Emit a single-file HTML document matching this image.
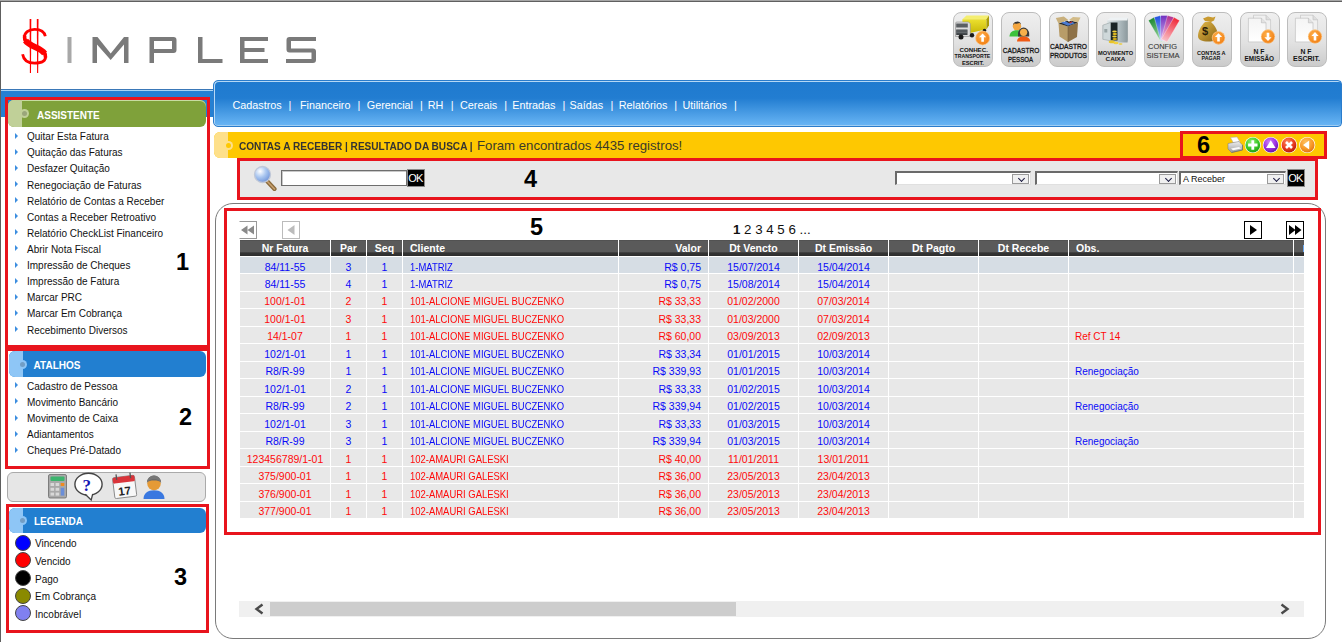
<!DOCTYPE html>
<html><head><meta charset="utf-8">
<style>
*{box-sizing:border-box;margin:0;padding:0}
html,body{width:1342px;height:642px;overflow:hidden;background:#fff}
body{position:relative;font-family:"Liberation Sans",sans-serif;font-size:11px;color:#000}
.abs{position:absolute}
#topb{left:0;top:0;width:1342px;height:2px;background:linear-gradient(#a6a6a6 0,#a6a6a6 1px,#606060 1px,#606060 2px)}
#leftb{left:0;top:1px;width:1px;height:641px;background:#5e5e5e}
/* sidebar band */
#sband{left:1px;top:89px;width:213px;height:28px;background:#2580d2;border-top:1px solid #3a78b8}
#sband:before{content:"";position:absolute;left:0;top:0;right:0;height:1px;background:#a9d3f3}
/* nav */
#nav{left:213px;top:80px;width:1129px;height:47px;border:1px solid #2a7ccc;border-radius:5px 4px 4px 5px;
 background:linear-gradient(#1f7acf 0%,#227dd1 38%,#6ab6f5 100%);box-shadow:inset 1px 1px 0 #b5d8f5, inset 0 -1px 0 #9fcdf2}
#nav span{position:absolute;top:17.8px;color:#fff;font-size:10.8px;line-height:12px;white-space:pre}
/* yellow bar */
#ybar{left:214px;top:132px;width:1110px;height:26px;background:#fec801;border-radius:6px 0 0 6px}
#ybar .tab{position:absolute;left:0;top:0;width:14px;height:26px;background:#fee08a;border-radius:6px 0 0 6px}
#ybar .t1{position:absolute;left:25px;top:8px;font-weight:bold;font-size:11px;line-height:13px;color:#333;white-space:pre;transform:scaleX(0.916);transform-origin:0 0}
#ybar .t2{position:absolute;left:263px;top:6.7px;font-size:13.2px;line-height:14px;color:#3a3a2a;white-space:pre}
/* search bar */
#sbar{left:239px;top:160px;width:1077px;height:38px;background:#e8e8e8}
/* main box */
#mainbox{left:215px;top:203px;width:1111px;height:436px;border:1.5px solid #7a7a7a;border-radius:18px;background:#fff}
/* red annotation boxes */
.rb{position:absolute;border:3px solid #e8141d}
.num{position:absolute;font-weight:bold;font-size:23.5px;line-height:24px;color:#000}
/* sidebar */
.shead{position:absolute;height:26px;border-radius:6px;color:#fff;font-weight:bold;font-size:10px}
.shead .tab{position:absolute;left:0;top:0;bottom:0;width:14px;border-radius:6px 0 0 6px}
.shead .dot{position:absolute;width:9px;height:9px;border-radius:50%}
.shead .dot:after{content:"";position:absolute;left:2px;top:2px;width:5px;height:5px;border-radius:50%;background:inherit;filter:brightness(0.8)}
.shead span{position:absolute;left:29px;top:8px}
.items{position:absolute;left:14px}
.items div{height:16.12px;line-height:16.12px;position:relative;padding-left:13px;font-size:10px;color:#111}
.items div:before{content:"";position:absolute;left:1px;top:3.5px;border-left:3px solid #3c8ee0;border-top:3px solid transparent;border-bottom:3px solid transparent}
/* table */
.th{position:absolute;top:240px;height:16px;background:linear-gradient(#4a4a4a 0px,#5a5a5a 1px,#5a5a5a 11.5px,#343434 13px,#2e2e2e 16px);color:#fff;font-weight:bold;font-size:10.5px;line-height:16.7px;white-space:nowrap;overflow:hidden}
.tr{position:absolute;left:0;height:17.47px;width:1342px}
.td{position:absolute;top:0;height:17.47px;border-top:1px solid #fff;background:#e8e8e8;font-size:10.5px;line-height:16.4px;padding-top:1.5px;white-space:nowrap;overflow:hidden}
.tr.sel .td{background:#d6dde4}
.tr.b .td{color:#0a0af8}
.tr.r .td{color:#ff0a0a}
.c{text-align:center}.l{text-align:left;padding-left:7px}.rt{text-align:right;padding-right:7px}
/* top icons */
.tico{position:absolute;top:12px;width:40px;height:55px;border:1px solid #bdbdbd;border-radius:8px;background:linear-gradient(#efefef,#e2e2e2 55%,#cbcbcb);overflow:hidden}
.tico .lbl{position:absolute;left:0;right:0;text-align:center;font-size:6px;line-height:6.5px;color:#222;font-weight:bold}

.okb{background:#000;border:1px solid #8a8a8a;color:#fff;font-size:11px;line-height:17px;text-align:center;letter-spacing:-0.8px;text-indent:-1px}
.dd{position:absolute;height:14px;background:#fff;border-top:2px solid #6a6a6a;border-left:2px solid #6a6a6a;border-right:1px solid #e0e0e0;border-bottom:1px solid #e0e0e0}
.dd i{position:absolute;right:1px;top:1px;width:17px;height:10px;background:#f0f0f0;border:1px solid #9a9a9a}
.dd i:after{content:"";position:absolute;left:5.5px;top:0.5px;width:4px;height:4px;border-right:1.6px solid #1a1a40;border-bottom:1.6px solid #1a1a40;transform:rotate(45deg)}
.dd span{position:absolute;left:2px;top:0px;font-size:9px;line-height:13px;color:#111}
.pbtn{position:absolute;border:1px solid #999;background:#fff}
.pbtn svg{position:absolute;left:0;top:0}
.pages{left:733px;top:222.6px;font-size:13.3px;line-height:14px;color:#111;white-space:pre}
.pages b{font-weight:bold}
.leg{position:absolute;left:15px;height:18px;padding-left:20px;font-size:10px;line-height:20.6px;color:#111}
.leg i{position:absolute;left:0;top:0.3px;width:16px;height:16px;border-radius:50%;border:1px solid #444}
.td.cli span{display:inline-block;transform:scaleX(0.9);transform-origin:0 0}
.td.obs{font-size:10px;padding-left:6px;padding-top:2px}
</style></head><body>
<div id="topb" class="abs"></div>
<div id="leftb" class="abs"></div>

<!-- logo -->
<svg class="abs" style="left:0;top:0" width="330" height="80">
 <g fill="none" stroke="#ff0000" stroke-linecap="butt">
  <path d="M45.3 36.2C44.3 31.2 40.2 29.3 34.6 29.3C28.6 29.3 24.3 32.6 24.3 37.6C24.3 43.2 29.5 45.2 35 47.2C41 49.4 45.6 51.6 45.6 56.6C45.6 61.2 40.6 63.2 34.6 63.2C28.3 63.2 23.6 60.2 22.6 54.2" stroke-width="2.8"/>
  <path d="M25.5 40.5C27.5 43.5 30.5 45 35 47C39.5 49 42.5 50.5 44.6 53.5" stroke-width="6"/>
  <path d="M24.6 35.5C24.3 38 24.8 40 26 41.5M44.3 52.5C45.2 54 45.6 55 45.5 57.5" stroke-width="3.6"/>
 </g>
 <path d="M29.6 19h1.7l-.3 54h-1.1z" fill="#ff0000"/>
 <path d="M36.8 19h1.7l-.3 54h-1.1z" fill="#ff0000"/>
 <g fill="#7a7a7a">
  <rect x="67.5" y="37" width="4" height="26" fill="#a8a8a8"/>
  <path d="M92.5 37h5l13.2 16.5L124 37h4.5v26h-4.5V44.5L110.7 60 97 44.5V63h-4.5z"/>
  <path d="M149.5 37h24a3 3 0 0 1 3 3v10a3 3 0 0 1-3 3h-19.5v10h-4.5zM154 41v8h18v-8z"/>
  <path d="M198 37h4.5v22h20v4H198z"/>
  <path d="M240 37h28v4h-23.5v7h20v4h-20v7h23.5v4H240z"/>
  <path d="M289.5 37h26.5v4h-25v7.5h22a3 3 0 0 1 3 3V60a3 3 0 0 1-3 3h-27v-4h25.5v-6.5h-22a3 3 0 0 1-3-3V40a3 3 0 0 1 3-3z"/>
 </g>
</svg>

<!-- top icons -->
<svg width="0" height="0" style="position:absolute"><defs><radialGradient id="og" cx="0.4" cy="0.35" r="0.7"><stop offset="0" stop-color="#ffb04a"/><stop offset="1" stop-color="#f07b10"/></radialGradient><linearGradient id="yg" x1="0" y1="0" x2="0" y2="1"><stop offset="0" stop-color="#ece030"/><stop offset="1" stop-color="#c8b808"/></linearGradient><linearGradient id="bag" x1="0" y1="0" x2="1" y2="1"><stop offset="0" stop-color="#e2b84a"/><stop offset="1" stop-color="#8a6414"/></linearGradient><linearGradient id="doc" x1="0" y1="0" x2="0" y2="1"><stop offset="0" stop-color="#f4f4f4"/><stop offset="1" stop-color="#ffffff"/></linearGradient><linearGradient id="safe" x1="0" y1="0" x2="1" y2="0"><stop offset="0" stop-color="#dfe6e8"/><stop offset="0.5" stop-color="#b8c4c8"/><stop offset="1" stop-color="#8d9a9e"/></linearGradient></defs></svg><div class="tico" style="left:953px"><svg width="40" height="54" viewBox="0 0 40 54" style="position:absolute;left:-1px;top:-1px"><path d="M9.4 7.2L13.5 3.6H36L33.5 7.2z" fill="#f4ee70"/><path d="M9.4 7.2h24.1v10L17 21H9.4z" fill="url(#yg)"/><path d="M33.5 7.2L36 3.6v9.6l-2.5 4z" fill="#a89a08"/><path d="M2.5 11.5q0-1.5 1.5-1.5h11.5l1.8 1.8v12.7H2.5z" fill="#dcdcdc" stroke="#8a8a8a" stroke-width="0.6"/><path d="M3.2 11.6h11.6v4H3.2z" fill="#5a5e62"/><path d="M3.2 17.5h11.3v5.5H3.2z" fill="#3e4246"/><path d="M3.6 19h10.6M3.6 20.7h10.6" stroke="#8a9094" stroke-width="0.6"/><circle cx="8" cy="25" r="2.5" fill="#1a1a1a"/><circle cx="19" cy="23.3" r="2.2" fill="#1a1a1a"/><circle cx="31.5" cy="18.5" r="1.8" fill="#1a1a1a"/><circle cx="29.6" cy="26" r="7.2" fill="url(#og)"/><circle cx="29.6" cy="26" r="6.9" fill="none" stroke="#fff2d0" stroke-width="0.6" opacity="0.7"/><path d="M29.6 21.5l-3.6 3.8h2.3v4.5h2.6v-4.5h2.3z" fill="#fff"/><text x="6.5" y="39.6" font-size="6.2" font-weight="bold" fill="#141414" textLength="28.4" lengthAdjust="spacingAndGlyphs">CONHEC.</text><text x="1.6" y="46.3" font-size="6.2" font-weight="bold" fill="#141414" textLength="35.7" lengthAdjust="spacingAndGlyphs">TRANSPORTE</text><text x="8.9" y="52.6" font-size="6.2" font-weight="bold" fill="#141414" textLength="22" lengthAdjust="spacingAndGlyphs">ESCRIT.</text></svg></div><div class="tico" style="left:1001px"><svg width="40" height="54" viewBox="0 0 40 54" style="position:absolute;left:-1px;top:-1px"><circle cx="16" cy="14.2" r="4.2" fill="#f4a640"/><path d="M11.8 13.5a4.3 4.3 0 0 1 8.4-.8l-1.5-1.7-3.2.8-2.4-.3z" fill="#333"/><path d="M8.4 24.6c.4-4 2.5-6.3 7.6-6.3s7 2.3 7.4 6.3z" fill="#3cc23c"/><path d="M17 22a5.6 6.5 0 0 1 11.2 0v2.6h-11.2z" fill="#3a3a3a"/><circle cx="22.6" cy="20.3" r="3.6" fill="#f7b04a"/><path d="M16 29.4c.3-3.5 2.5-5 6.6-5s6.3 1.5 6.6 5z" fill="#f05a14"/><text x="1.8" y="41" font-size="7.6" font-weight="normal" fill="#141414" stroke="#141414" stroke-width="0.3" textLength="36.5" lengthAdjust="spacingAndGlyphs">CADASTRO</text><text x="7" y="49.7" font-size="7.6" font-weight="normal" fill="#141414" stroke="#141414" stroke-width="0.3" textLength="25" lengthAdjust="spacingAndGlyphs">PESSOA</text></svg></div><div class="tico" style="left:1049px"><svg width="40" height="54" viewBox="0 0 40 54" style="position:absolute;left:-1px;top:-1px"><path d="M9.5 11.5L19 14.5v15.5l-8.5-5.5z" fill="#b89c68"/><path d="M19 14.5l10-4-1 14.5-9 5z" fill="#8e7248"/><path d="M9.5 11.5l9.5 3 10-4-9.5-2.5z" fill="#2a2a2a"/><path d="M12 10.8l4-2 4 2.5 3-1.5 3 1.5-7 2.5z" fill="#4a7ad0"/><path d="M15 9.5l2-2.5 3 2 2.5-1.5" stroke="#f0f0f0" stroke-width="1.3" fill="none"/><path d="M20.5 11l2.5-1.2" stroke="#c83030" stroke-width="1.1"/><path d="M9.5 11.5L6.8 6l8-1.5 4.5 3.5z" fill="#c9b07c"/><path d="M29 10.5l2.5-5-7.5-.5-4 3z" fill="#d2bb88"/><path d="M19 30v-15.5" stroke="#6a5434" stroke-width="0.5"/><text x="1" y="36.7" font-size="7.6" font-weight="normal" fill="#141414" stroke="#141414" stroke-width="0.3" textLength="37" lengthAdjust="spacingAndGlyphs">CADASTRO</text><text x="1" y="45.8" font-size="7.6" font-weight="normal" fill="#141414" stroke="#141414" stroke-width="0.3" textLength="37" lengthAdjust="spacingAndGlyphs">PRODUTOS</text></svg></div><div class="tico" style="left:1096px"><svg width="40" height="54" viewBox="0 0 40 54" style="position:absolute;left:-1px;top:-1px"><path d="M11 8.5L14.5 5.5H32L31.5 8.5z" fill="#eef2f4"/><path d="M11 8.5h20.5v22H11z" fill="url(#safe)"/><path d="M31.5 8.5L32 5.5v22.5l-.5 2.5z" fill="#7e8c90"/><path d="M14.5 10.5h7v18h-7z" fill="#1a2426"/><path d="M6.8 13.2L14.5 10.5v18.3L6.8 27.3z" fill="#cfd8da" stroke="#8a9699" stroke-width="0.5"/><path d="M8.3 17h3v3.5h-3z" fill="#98a4a6"/><ellipse cx="18.5" cy="19.5" rx="2.3" ry="1.1" fill="#f0d040"/><ellipse cx="18.8" cy="22" rx="2.3" ry="1.1" fill="#e8c020"/><ellipse cx="18.5" cy="24.5" rx="2.3" ry="1.1" fill="#f0d040"/><ellipse cx="18.8" cy="27" rx="2.3" ry="1.1" fill="#d8b010"/><ellipse cx="15.8" cy="29.8" rx="3" ry="1.5" fill="#e8c42a"/><ellipse cx="20" cy="31" rx="2.6" ry="1.3" fill="#f0d040"/><ellipse cx="24.5" cy="32" rx="2" ry="1" fill="#e8d060"/><text x="2.1" y="43.4" font-size="6.2" font-weight="bold" fill="#141414" textLength="35" lengthAdjust="spacingAndGlyphs">MOVIMENTO</text><text x="9.5" y="49.2" font-size="6.2" font-weight="bold" fill="#141414" textLength="20" lengthAdjust="spacingAndGlyphs">CAIXA</text></svg></div><div class="tico" style="left:1144px"><svg width="40" height="54" viewBox="0 0 40 54" style="position:absolute;left:-1px;top:-1px"><defs><linearGradient id="fg0" x1="0" y1="0" x2="0" y2="1"><stop offset="0" stop-color="#1e8a30"/><stop offset="1" stop-color="#a8e0b0"/></linearGradient><linearGradient id="fg1" x1="0" y1="0" x2="0" y2="1"><stop offset="0" stop-color="#2050e0"/><stop offset="1" stop-color="#b0c8f8"/></linearGradient><linearGradient id="fg2" x1="0" y1="0" x2="0" y2="1"><stop offset="0" stop-color="#7030c0"/><stop offset="1" stop-color="#d8b8f0"/></linearGradient><linearGradient id="fg3" x1="0" y1="0" x2="0" y2="1"><stop offset="0" stop-color="#b03090"/><stop offset="1" stop-color="#f0b8e0"/></linearGradient><linearGradient id="fg4" x1="0" y1="0" x2="0" y2="1"><stop offset="0" stop-color="#f02838"/><stop offset="1" stop-color="#f8c0c8"/></linearGradient></defs><g transform="rotate(-30 20 29)"><rect x="16.8" y="3.5" width="6.4" height="25" fill="url(#fg0)" stroke="#fff" stroke-width="0.3"/></g><g transform="rotate(-15 20 29)"><rect x="16.8" y="3.5" width="6.4" height="25" fill="url(#fg1)" stroke="#fff" stroke-width="0.3"/></g><g transform="rotate(0 20 29)"><rect x="16.8" y="3.5" width="6.4" height="25" fill="url(#fg2)" stroke="#fff" stroke-width="0.3"/></g><g transform="rotate(15 20 29)"><rect x="16.8" y="3.5" width="6.4" height="25" fill="url(#fg3)" stroke="#fff" stroke-width="0.3"/></g><g transform="rotate(30 20 29)"><rect x="16.8" y="3.5" width="6.4" height="25" fill="url(#fg4)" stroke="#fff" stroke-width="0.3"/></g><text x="4" y="36.7" font-size="7.8" font-weight="normal" fill="#3a3a3a" stroke="#3a3a3a" stroke-width="0.12" textLength="29" lengthAdjust="spacingAndGlyphs">CONFIG</text><text x="2.5" y="46.3" font-size="7.8" font-weight="normal" fill="#3a3a3a" stroke="#3a3a3a" stroke-width="0.12" textLength="33" lengthAdjust="spacingAndGlyphs">SISTEMA</text></svg></div><div class="tico" style="left:1192px"><svg width="40" height="54" viewBox="0 0 40 54" style="position:absolute;left:-1px;top:-1px"><path d="M11 6.5l5-2 5 1 2.5-1-1.5 4-3 1.5-6-1z" fill="#c99a30"/><path d="M13 10c-4 4-7 9-7 14 0 4 4 5.5 10 5.5s9.5-1.5 10-4c.5-6-3-12-7-15.5z" fill="url(#bag)"/><text x="10" y="23" font-size="11" font-weight="bold" fill="#2a2008">$</text><circle cx="26.5" cy="25.8" r="6.6" fill="url(#og)"/><circle cx="26.5" cy="25.8" r="6.3" fill="none" stroke="#fff2d0" stroke-width="0.6" opacity="0.7"/><path d="M26.5 21.3l-3.6 3.8h2.3v4.5h2.6v-4.5h2.3z" fill="#fff"/><text x="5" y="42.5" font-size="6" font-weight="bold" fill="#141414" textLength="28.5" lengthAdjust="spacingAndGlyphs">CONTAS A</text><text x="9.5" y="48.3" font-size="6" font-weight="bold" fill="#141414" textLength="19" lengthAdjust="spacingAndGlyphs">PAGAR</text></svg></div><div class="tico" style="left:1240px"><svg width="40" height="54" viewBox="0 0 40 54" style="position:absolute;left:-1px;top:-1px"><path d="M13.5 3.2h12.5l4.6 4.6v18H13.5z" fill="#f0f0f0" stroke="#bdbdbd" stroke-width="0.6"/><path d="M26 3.2v4.6h4.6" fill="#dedede" stroke="#bdbdbd" stroke-width="0.6"/><path d="M8.4 6.2h13l4.6 4.6v19.1H8.4z" fill="url(#doc)" stroke="#b8b8b8" stroke-width="0.6"/><path d="M21.4 6.2v4.6h4.6" fill="#e2e2e2" stroke="#b8b8b8" stroke-width="0.6"/><circle cx="28" cy="24.6" r="7" fill="url(#og)"/><circle cx="28" cy="24.6" r="6.7" fill="none" stroke="#fff2d0" stroke-width="0.6" opacity="0.7"/><path d="M28 29.1l-3.6 -3.8h2.3v-4.5h2.6v4.5h2.3z" fill="#fff"/><text x="13.5" y="42" font-size="6.4" font-weight="bold" fill="#141414" textLength="11" lengthAdjust="spacingAndGlyphs">N F</text><text x="4.6" y="49.2" font-size="6.4" font-weight="bold" fill="#141414" textLength="29.5" lengthAdjust="spacingAndGlyphs">EMISSÃO</text></svg></div><div class="tico" style="left:1287px"><svg width="40" height="54" viewBox="0 0 40 54" style="position:absolute;left:-1px;top:-1px"><path d="M13.5 3.2h12.5l4.6 4.6v18H13.5z" fill="#f0f0f0" stroke="#bdbdbd" stroke-width="0.6"/><path d="M26 3.2v4.6h4.6" fill="#dedede" stroke="#bdbdbd" stroke-width="0.6"/><path d="M8.4 6.2h13l4.6 4.6v19.1H8.4z" fill="url(#doc)" stroke="#b8b8b8" stroke-width="0.6"/><path d="M21.4 6.2v4.6h4.6" fill="#e2e2e2" stroke="#b8b8b8" stroke-width="0.6"/><circle cx="28" cy="24.6" r="7" fill="url(#og)"/><circle cx="28" cy="24.6" r="6.7" fill="none" stroke="#fff2d0" stroke-width="0.6" opacity="0.7"/><path d="M28 20.1l-3.6 3.8h2.3v4.5h2.6v-4.5h2.3z" fill="#fff"/><text x="13.5" y="42" font-size="6.4" font-weight="bold" fill="#141414" textLength="11" lengthAdjust="spacingAndGlyphs">N F</text><text x="6" y="49.2" font-size="6.4" font-weight="bold" fill="#141414" textLength="27" lengthAdjust="spacingAndGlyphs">ESCRIT.</text></svg></div>

<div id="sband" class="abs"></div>
<div id="nav" class="abs"><span style="left:18.5px">Cadastros</span><span style="left:74.5px">|</span><span style="left:86.0px">Financeiro</span><span style="left:143.4px">|</span><span style="left:152.8px">Gerencial</span><span style="left:206.0px">|</span><span style="left:213.7px">RH</span><span style="left:236.7px">|</span><span style="left:246.0px">Cereais</span><span style="left:290.3px">|</span><span style="left:298.2px">Entradas</span><span style="left:348.5px">|</span><span style="left:355.6px">Saídas</span><span style="left:396.5px">|</span><span style="left:404.8px">Relatórios</span><span style="left:460.2px">|</span><span style="left:468.5px">Utilitários</span><span style="left:520.0px">|</span></div>

<div id="ybar" class="abs"><div class="tab"></div><b style="position:absolute;left:10px;top:8.5px;width:9px;height:9px;border-radius:50%;background:#fee08a"></b><b style="position:absolute;left:12px;top:10.5px;width:5px;height:5px;border-radius:50%;background:#fec801"></b>
 <div class="t1">CONTAS A RECEBER | RESULTADO DA BUSCA |</div>
 <div class="t2">Foram encontrados 4435 registros!</div>
</div>

<div id="sbar" class="abs"></div>
<div id="mainbox" class="abs"></div>

<div class="th c" style="left:240px;width:90px"><span>Nr Fatura</span></div>
<div class="th c" style="left:331px;width:35px"><span>Par</span></div>
<div class="th c" style="left:367px;width:35px"><span>Seq</span></div>
<div class="th l" style="left:403px;width:215px"><span>Cliente</span></div>
<div class="th rt" style="left:619px;width:89px"><span>Valor</span></div>
<div class="th c" style="left:709px;width:89px"><span>Dt Vencto</span></div>
<div class="th c" style="left:799px;width:89px"><span>Dt Emissão</span></div>
<div class="th c" style="left:889px;width:89px"><span>Dt Pagto</span></div>
<div class="th c" style="left:979px;width:89px"><span>Dt Recebe</span></div>
<div class="th l" style="left:1069px;width:224px"><span>Obs.</span></div>
<div class="th l" style="left:1294px;width:10px"><span></span></div>
<div class="tr sel b" style="top:256.00px"><div class="td c" style="left:240px;width:90px"><span>84/11-55</span></div><div class="td c" style="left:331px;width:35px"><span>3</span></div><div class="td c" style="left:367px;width:35px"><span>1</span></div><div class="td l cli" style="left:403px;width:215px"><span>1-MATRIZ</span></div><div class="td rt" style="left:619px;width:89px"><span>R$ 0,75</span></div><div class="td c" style="left:709px;width:89px"><span>15/07/2014</span></div><div class="td c" style="left:799px;width:89px"><span>15/04/2014</span></div><div class="td c" style="left:889px;width:89px"><span></span></div><div class="td c" style="left:979px;width:89px"><span></span></div><div class="td l obs" style="left:1069px;width:224px"><span></span></div><div class="td l" style="left:1294px;width:10px"><span></span></div></div>
<div class="tr  b" style="top:273.47px"><div class="td c" style="left:240px;width:90px"><span>84/11-55</span></div><div class="td c" style="left:331px;width:35px"><span>4</span></div><div class="td c" style="left:367px;width:35px"><span>1</span></div><div class="td l cli" style="left:403px;width:215px"><span>1-MATRIZ</span></div><div class="td rt" style="left:619px;width:89px"><span>R$ 0,75</span></div><div class="td c" style="left:709px;width:89px"><span>15/08/2014</span></div><div class="td c" style="left:799px;width:89px"><span>15/04/2014</span></div><div class="td c" style="left:889px;width:89px"><span></span></div><div class="td c" style="left:979px;width:89px"><span></span></div><div class="td l obs" style="left:1069px;width:224px"><span></span></div><div class="td l" style="left:1294px;width:10px"><span></span></div></div>
<div class="tr  r" style="top:290.94px"><div class="td c" style="left:240px;width:90px"><span>100/1-01</span></div><div class="td c" style="left:331px;width:35px"><span>2</span></div><div class="td c" style="left:367px;width:35px"><span>1</span></div><div class="td l cli" style="left:403px;width:215px"><span>101-ALCIONE MIGUEL BUCZENKO</span></div><div class="td rt" style="left:619px;width:89px"><span>R$ 33,33</span></div><div class="td c" style="left:709px;width:89px"><span>01/02/2000</span></div><div class="td c" style="left:799px;width:89px"><span>07/03/2014</span></div><div class="td c" style="left:889px;width:89px"><span></span></div><div class="td c" style="left:979px;width:89px"><span></span></div><div class="td l obs" style="left:1069px;width:224px"><span></span></div><div class="td l" style="left:1294px;width:10px"><span></span></div></div>
<div class="tr  r" style="top:308.41px"><div class="td c" style="left:240px;width:90px"><span>100/1-01</span></div><div class="td c" style="left:331px;width:35px"><span>3</span></div><div class="td c" style="left:367px;width:35px"><span>1</span></div><div class="td l cli" style="left:403px;width:215px"><span>101-ALCIONE MIGUEL BUCZENKO</span></div><div class="td rt" style="left:619px;width:89px"><span>R$ 33,33</span></div><div class="td c" style="left:709px;width:89px"><span>01/03/2000</span></div><div class="td c" style="left:799px;width:89px"><span>07/03/2014</span></div><div class="td c" style="left:889px;width:89px"><span></span></div><div class="td c" style="left:979px;width:89px"><span></span></div><div class="td l obs" style="left:1069px;width:224px"><span></span></div><div class="td l" style="left:1294px;width:10px"><span></span></div></div>
<div class="tr  r" style="top:325.88px"><div class="td c" style="left:240px;width:90px"><span>14/1-07</span></div><div class="td c" style="left:331px;width:35px"><span>1</span></div><div class="td c" style="left:367px;width:35px"><span>1</span></div><div class="td l cli" style="left:403px;width:215px"><span>101-ALCIONE MIGUEL BUCZENKO</span></div><div class="td rt" style="left:619px;width:89px"><span>R$ 60,00</span></div><div class="td c" style="left:709px;width:89px"><span>03/09/2013</span></div><div class="td c" style="left:799px;width:89px"><span>02/09/2013</span></div><div class="td c" style="left:889px;width:89px"><span></span></div><div class="td c" style="left:979px;width:89px"><span></span></div><div class="td l obs" style="left:1069px;width:224px"><span>Ref CT 14</span></div><div class="td l" style="left:1294px;width:10px"><span></span></div></div>
<div class="tr  b" style="top:343.35px"><div class="td c" style="left:240px;width:90px"><span>102/1-01</span></div><div class="td c" style="left:331px;width:35px"><span>1</span></div><div class="td c" style="left:367px;width:35px"><span>1</span></div><div class="td l cli" style="left:403px;width:215px"><span>101-ALCIONE MIGUEL BUCZENKO</span></div><div class="td rt" style="left:619px;width:89px"><span>R$ 33,34</span></div><div class="td c" style="left:709px;width:89px"><span>01/01/2015</span></div><div class="td c" style="left:799px;width:89px"><span>10/03/2014</span></div><div class="td c" style="left:889px;width:89px"><span></span></div><div class="td c" style="left:979px;width:89px"><span></span></div><div class="td l obs" style="left:1069px;width:224px"><span></span></div><div class="td l" style="left:1294px;width:10px"><span></span></div></div>
<div class="tr  b" style="top:360.82px"><div class="td c" style="left:240px;width:90px"><span>R8/R-99</span></div><div class="td c" style="left:331px;width:35px"><span>1</span></div><div class="td c" style="left:367px;width:35px"><span>1</span></div><div class="td l cli" style="left:403px;width:215px"><span>101-ALCIONE MIGUEL BUCZENKO</span></div><div class="td rt" style="left:619px;width:89px"><span>R$ 339,93</span></div><div class="td c" style="left:709px;width:89px"><span>01/01/2015</span></div><div class="td c" style="left:799px;width:89px"><span>10/03/2014</span></div><div class="td c" style="left:889px;width:89px"><span></span></div><div class="td c" style="left:979px;width:89px"><span></span></div><div class="td l obs" style="left:1069px;width:224px"><span>Renegociação</span></div><div class="td l" style="left:1294px;width:10px"><span></span></div></div>
<div class="tr  b" style="top:378.29px"><div class="td c" style="left:240px;width:90px"><span>102/1-01</span></div><div class="td c" style="left:331px;width:35px"><span>2</span></div><div class="td c" style="left:367px;width:35px"><span>1</span></div><div class="td l cli" style="left:403px;width:215px"><span>101-ALCIONE MIGUEL BUCZENKO</span></div><div class="td rt" style="left:619px;width:89px"><span>R$ 33,33</span></div><div class="td c" style="left:709px;width:89px"><span>01/02/2015</span></div><div class="td c" style="left:799px;width:89px"><span>10/03/2014</span></div><div class="td c" style="left:889px;width:89px"><span></span></div><div class="td c" style="left:979px;width:89px"><span></span></div><div class="td l obs" style="left:1069px;width:224px"><span></span></div><div class="td l" style="left:1294px;width:10px"><span></span></div></div>
<div class="tr  b" style="top:395.76px"><div class="td c" style="left:240px;width:90px"><span>R8/R-99</span></div><div class="td c" style="left:331px;width:35px"><span>2</span></div><div class="td c" style="left:367px;width:35px"><span>1</span></div><div class="td l cli" style="left:403px;width:215px"><span>101-ALCIONE MIGUEL BUCZENKO</span></div><div class="td rt" style="left:619px;width:89px"><span>R$ 339,94</span></div><div class="td c" style="left:709px;width:89px"><span>01/02/2015</span></div><div class="td c" style="left:799px;width:89px"><span>10/03/2014</span></div><div class="td c" style="left:889px;width:89px"><span></span></div><div class="td c" style="left:979px;width:89px"><span></span></div><div class="td l obs" style="left:1069px;width:224px"><span>Renegociação</span></div><div class="td l" style="left:1294px;width:10px"><span></span></div></div>
<div class="tr  b" style="top:413.23px"><div class="td c" style="left:240px;width:90px"><span>102/1-01</span></div><div class="td c" style="left:331px;width:35px"><span>3</span></div><div class="td c" style="left:367px;width:35px"><span>1</span></div><div class="td l cli" style="left:403px;width:215px"><span>101-ALCIONE MIGUEL BUCZENKO</span></div><div class="td rt" style="left:619px;width:89px"><span>R$ 33,33</span></div><div class="td c" style="left:709px;width:89px"><span>01/03/2015</span></div><div class="td c" style="left:799px;width:89px"><span>10/03/2014</span></div><div class="td c" style="left:889px;width:89px"><span></span></div><div class="td c" style="left:979px;width:89px"><span></span></div><div class="td l obs" style="left:1069px;width:224px"><span></span></div><div class="td l" style="left:1294px;width:10px"><span></span></div></div>
<div class="tr  b" style="top:430.70px"><div class="td c" style="left:240px;width:90px"><span>R8/R-99</span></div><div class="td c" style="left:331px;width:35px"><span>3</span></div><div class="td c" style="left:367px;width:35px"><span>1</span></div><div class="td l cli" style="left:403px;width:215px"><span>101-ALCIONE MIGUEL BUCZENKO</span></div><div class="td rt" style="left:619px;width:89px"><span>R$ 339,94</span></div><div class="td c" style="left:709px;width:89px"><span>01/03/2015</span></div><div class="td c" style="left:799px;width:89px"><span>10/03/2014</span></div><div class="td c" style="left:889px;width:89px"><span></span></div><div class="td c" style="left:979px;width:89px"><span></span></div><div class="td l obs" style="left:1069px;width:224px"><span>Renegociação</span></div><div class="td l" style="left:1294px;width:10px"><span></span></div></div>
<div class="tr  r" style="top:448.17px"><div class="td c" style="left:240px;width:90px"><span>123456789/1-01</span></div><div class="td c" style="left:331px;width:35px"><span>1</span></div><div class="td c" style="left:367px;width:35px"><span>1</span></div><div class="td l cli" style="left:403px;width:215px"><span>102-AMAURI GALESKI</span></div><div class="td rt" style="left:619px;width:89px"><span>R$ 40,00</span></div><div class="td c" style="left:709px;width:89px"><span>11/01/2011</span></div><div class="td c" style="left:799px;width:89px"><span>13/01/2011</span></div><div class="td c" style="left:889px;width:89px"><span></span></div><div class="td c" style="left:979px;width:89px"><span></span></div><div class="td l obs" style="left:1069px;width:224px"><span></span></div><div class="td l" style="left:1294px;width:10px"><span></span></div></div>
<div class="tr  r" style="top:465.64px"><div class="td c" style="left:240px;width:90px"><span>375/900-01</span></div><div class="td c" style="left:331px;width:35px"><span>1</span></div><div class="td c" style="left:367px;width:35px"><span>1</span></div><div class="td l cli" style="left:403px;width:215px"><span>102-AMAURI GALESKI</span></div><div class="td rt" style="left:619px;width:89px"><span>R$ 36,00</span></div><div class="td c" style="left:709px;width:89px"><span>23/05/2013</span></div><div class="td c" style="left:799px;width:89px"><span>23/04/2013</span></div><div class="td c" style="left:889px;width:89px"><span></span></div><div class="td c" style="left:979px;width:89px"><span></span></div><div class="td l obs" style="left:1069px;width:224px"><span></span></div><div class="td l" style="left:1294px;width:10px"><span></span></div></div>
<div class="tr  r" style="top:483.11px"><div class="td c" style="left:240px;width:90px"><span>376/900-01</span></div><div class="td c" style="left:331px;width:35px"><span>1</span></div><div class="td c" style="left:367px;width:35px"><span>1</span></div><div class="td l cli" style="left:403px;width:215px"><span>102-AMAURI GALESKI</span></div><div class="td rt" style="left:619px;width:89px"><span>R$ 36,00</span></div><div class="td c" style="left:709px;width:89px"><span>23/05/2013</span></div><div class="td c" style="left:799px;width:89px"><span>23/04/2013</span></div><div class="td c" style="left:889px;width:89px"><span></span></div><div class="td c" style="left:979px;width:89px"><span></span></div><div class="td l obs" style="left:1069px;width:224px"><span></span></div><div class="td l" style="left:1294px;width:10px"><span></span></div></div>
<div class="tr  r" style="top:500.58px"><div class="td c" style="left:240px;width:90px"><span>377/900-01</span></div><div class="td c" style="left:331px;width:35px"><span>1</span></div><div class="td c" style="left:367px;width:35px"><span>1</span></div><div class="td l cli" style="left:403px;width:215px"><span>102-AMAURI GALESKI</span></div><div class="td rt" style="left:619px;width:89px"><span>R$ 36,00</span></div><div class="td c" style="left:709px;width:89px"><span>23/05/2013</span></div><div class="td c" style="left:799px;width:89px"><span>23/04/2013</span></div><div class="td c" style="left:889px;width:89px"><span></span></div><div class="td c" style="left:979px;width:89px"><span></span></div><div class="td l obs" style="left:1069px;width:224px"><span></span></div><div class="td l" style="left:1294px;width:10px"><span></span></div></div>

<!-- search row -->
<svg class="abs" style="left:253px;top:165px" width="26" height="26" viewBox="0 0 26 26">
 <defs><radialGradient id="lens" cx="0.35" cy="0.3" r="0.75"><stop offset="0" stop-color="#ffffff"/><stop offset="0.5" stop-color="#a9c6f0"/><stop offset="1" stop-color="#6f93d8"/></radialGradient></defs>
 <path d="M13.5 15.5l8 8.5" stroke="#8a6a3a" stroke-width="4.2" stroke-linecap="round"/>
 <path d="M14 16l7.5 8" stroke="#c8a070" stroke-width="1.6" stroke-linecap="round"/>
 <circle cx="9.5" cy="9.5" r="8" fill="url(#lens)" stroke="#c0c8d8" stroke-width="1.3"/>
</svg>
<div class="abs" style="left:281px;top:170px;width:126px;height:16px;background:#fff;border:1px solid #6e6e6e;box-shadow:inset 1px 1px 0 #c8c8c8"></div>
<div class="abs okb" style="left:407px;top:169px;width:18px;height:18px">OK</div>
<div class="dd" style="left:895px;top:171px;width:136px"><i></i></div>
<div class="dd" style="left:1035px;top:171px;width:143px"><i></i></div>
<div class="dd" style="left:1179px;top:171px;width:107px"><span>A Receber</span><i></i></div>
<div class="abs okb" style="left:1287px;top:169px;width:18px;height:18px">OK</div>

<!-- yellow bar icons -->
<svg class="abs" style="left:1226px;top:136px" width="92" height="18" viewBox="0 0 92 18">
 <defs>
  <radialGradient id="gG" cx="0.4" cy="0.3" r="0.75"><stop offset="0" stop-color="#90f070"/><stop offset="0.6" stop-color="#3cc828"/><stop offset="1" stop-color="#1e9a10"/></radialGradient>
  <radialGradient id="gP" cx="0.4" cy="0.3" r="0.75"><stop offset="0" stop-color="#d080ff"/><stop offset="0.6" stop-color="#9a30e0"/><stop offset="1" stop-color="#6010a0"/></radialGradient>
  <radialGradient id="gR" cx="0.4" cy="0.3" r="0.75"><stop offset="0" stop-color="#ff8a60"/><stop offset="0.6" stop-color="#e83a1e"/><stop offset="1" stop-color="#b01808"/></radialGradient>
  <radialGradient id="gO" cx="0.4" cy="0.3" r="0.75"><stop offset="0" stop-color="#ffc060"/><stop offset="0.6" stop-color="#f89a28"/><stop offset="1" stop-color="#e07010"/></radialGradient>
  <linearGradient id="prn" x1="0" y1="0" x2="0" y2="1"><stop offset="0" stop-color="#f0f0f0"/><stop offset="1" stop-color="#9a9a9a"/></linearGradient>
 </defs>
 <path d="M4.5 1.5l6.5-0.5 3 5-6.5 1z" fill="#fff" stroke="#aaa" stroke-width="0.5"/>
 <path d="M2 7.5l11-2 3.5 3.5v5l-11 2.5L2 13z" fill="url(#prn)" stroke="#777" stroke-width="0.5"/>
 <path d="M5.5 16.5l11-2.5v-5" fill="none" stroke="#666" stroke-width="0.6"/>
 <path d="M5 12.5l8-1.6 2 1.5-8 1.8z" fill="#fafafa"/>
 <circle cx="26.8" cy="9" r="8.1" fill="#fff"/><circle cx="26.8" cy="9" r="7.4" fill="url(#gG)"/>
 <path d="M25.4 4.3h2.8v3.3h3.3v2.8h-3.3v3.3h-2.8v-3.3h-3.3V7.6h3.3z" fill="#fff"/>
 <circle cx="44.8" cy="9" r="8.1" fill="#fff"/><circle cx="44.8" cy="9" r="7.4" fill="url(#gP)"/>
 <path d="M44.8 4.2l4.8 7.8h-9.6z" fill="#fff"/>
 <circle cx="63" cy="9" r="8.1" fill="#fff"/><circle cx="63" cy="9" r="7.4" fill="url(#gR)"/>
 <path d="M60 6l6 6M66 6l-6 6" stroke="#fff" stroke-width="2.6"/>
 <circle cx="81.2" cy="9" r="8.1" fill="#fff"/><circle cx="81.2" cy="9" r="7.4" fill="url(#gO)"/>
 <path d="M77 9l6.2-4.6v9.2z" fill="#fff"/>
</svg>

<div class="abs" style="left:1303px;top:245px;width:1px;height:7px;background:#6aa8f0;z-index:3"></div>
<!-- pager -->
<div class="pbtn" style="left:239px;top:221px;width:18px;height:18px;border-left-color:#fff"><svg width="16" height="16" viewBox="0 0 16 16"><path d="M1 8l6.5-4.6v9.2zM7.5 8l6.5-4.6v9.2z" fill="#8a8a8a"/></svg></div>
<div class="pbtn" style="left:282px;top:221px;width:18px;height:18px;border-color:#bbb"><svg width="16" height="16" viewBox="0 0 16 16"><path d="M4.5 8l7-5v10z" fill="#bbb"/></svg></div>
<div class="abs pages"><b>1</b> 2 3 4 5 6 ...</div>
<div class="pbtn" style="left:1244px;top:221px;width:18px;height:18px;border-color:#000"><svg width="16" height="16" viewBox="0 0 16 16"><path d="M5 3l7 5-7 5z" fill="#000"/></svg></div>
<div class="pbtn" style="left:1286px;top:221px;width:18px;height:18px;border-color:#000"><svg width="16" height="16" viewBox="0 0 16 16"><path d="M2 3l6.5 5L2 13zM8 3l6.5 5L8 13z" fill="#000"/></svg></div>

<!-- scrollbar -->
<div class="abs" style="left:239px;top:601px;width:1065px;height:16px;background:#f0f0f0"></div>
<div class="abs" style="left:270px;top:602px;width:466px;height:14px;background:#cdcdcd"></div>
<svg class="abs" style="left:250px;top:602px" width="16" height="14"><path d="M12.5 2.5L6.5 7l6 4.5" stroke="#4a4a4a" stroke-width="2.4" fill="none"/></svg>
<svg class="abs" style="left:1276px;top:602px" width="16" height="14"><path d="M5.5 2.5L11.5 7l-6 4.5" stroke="#4a4a4a" stroke-width="2.4" fill="none"/></svg>

<!-- tools -->
<svg class="abs" style="left:44px;top:472px;z-index:2" width="130" height="30" viewBox="0 0 130 30">
 <rect x="4.5" y="2.5" width="18" height="23.5" rx="1.5" fill="#a9a9a9" stroke="#6a6a6a" stroke-width="0.8"/>
 <rect x="6.5" y="4.5" width="14" height="4.5" rx="1" fill="#3db46e"/>
 <g fill="#d8d8d8"><rect x="6.5" y="11" width="3.6" height="3"/><rect x="11.6" y="11" width="3.6" height="3"/><rect x="6.5" y="15.8" width="3.6" height="3"/><rect x="11.6" y="15.8" width="3.6" height="3"/><rect x="6.5" y="20.6" width="3.6" height="3"/><rect x="11.6" y="20.6" width="3.6" height="3"/></g>
 <rect x="16.7" y="11" width="3.6" height="3" fill="#f08a20"/>
 <rect x="16.7" y="15.8" width="3.6" height="7.8" fill="#6a8ed8"/>
 <path d="M44.3 1a13.8 11.3 0 1 1-3.5 22.3L46.5 28l-0.5-4.6" fill="none"/>
 <ellipse cx="44.5" cy="12.2" rx="13.6" ry="11" fill="#fff" stroke="#444" stroke-width="1.4"/>
 <path d="M42 22.2l5.2 5.8 1.8-6.2z" fill="#fff"/>
 <path d="M41.2 22.3l6 5.7 1.5-6" fill="none" stroke="#444" stroke-width="1.3"/>
 <text x="38.5" y="18.8" font-size="17" font-weight="bold" fill="#1414b4" font-family="Liberation Serif">?</text>
 <g transform="rotate(-7 80 14)">
 <rect x="69.5" y="4.5" width="22" height="21" rx="1.5" fill="#f8f8f8" stroke="#777" stroke-width="0.8"/>
 <rect x="69.5" y="4.5" width="22" height="6" rx="1.5" fill="#d9343a"/>
 <path d="M73.5 1.5v5.5M87.5 1.5v5.5" stroke="#555" stroke-width="1.3"/>
 <text x="73.5" y="23" font-size="11.5" font-weight="bold" fill="#222" font-family="Liberation Sans">17</text>
 </g>
 <path d="M99.5 27c0-5.5 4.3-8.8 10.5-8.8s10.5 3.3 10.5 8.8z" fill="#3a78e0"/>
 <circle cx="110" cy="11.5" r="6.8" fill="#e59a36"/>
 <path d="M103 10.5a7 7 0 0 1 14 0c-1.5-1.5-3.5-2-7-2s-5.5.5-7 2z" fill="#6a6a6a"/>
 <path d="M102.8 11a7.2 7.5 0 0 1 14.4 0c-2-3-4.2-4-7.2-4s-5.2 1-7.2 4z" fill="#777"/>
</svg>

<!-- legend -->
<div class="leg" style="top:534.3px"><i style="background:#0000ff"></i>Vincendo</div>
<div class="leg" style="top:552px"><i style="background:#ff0000"></i>Vencido</div>
<div class="leg" style="top:569.7px"><i style="background:#000"></i>Pago</div>
<div class="leg" style="top:587.4px"><i style="background:#8a8a00"></i>Em Cobrança</div>
<div class="leg" style="top:605.1px"><i style="background:#8080f0"></i>Incobrável</div>


<!-- sidebar headers -->
<div class="shead" style="left:8px;top:100px;width:198px;height:26.6px;background:#7fa13a;box-shadow:inset 0 1px 0 #c8dca0"><div class="tab" style="background:#c0d098"></div><b class="dot" style="background:#c0d098;left:11.5px;top:8.8px"></b><span style="top:10px">ASSISTENTE</span></div>
<div class="items" style="top:129.2px">
<div>Quitar Esta Fatura</div><div>Quitação das Faturas</div><div>Desfazer Quitação</div><div>Renegociação de Faturas</div><div>Relatório de Contas a Receber</div><div>Contas a Receber Retroativo</div><div>Relatório CheckList Financeiro</div><div>Abrir Nota Fiscal</div><div>Impressão de Cheques</div><div>Impressão de Fatura</div><div>Marcar PRC</div><div>Marcar Em Cobrança</div><div>Recebimento Diversos</div>
</div>

<div class="shead" style="left:9px;top:351px;width:197px;background:#227fd0"><div class="tab" style="background:#8ec6f6"></div><b class="dot" style="background:#8ec6f6;left:9px;top:8.5px"></b><span style="left:24.6px;top:9px">ATALHOS</span></div>
<div class="items" style="top:378.8px">
<div>Cadastro de Pessoa</div><div>Movimento Bancário</div><div>Movimento de Caixa</div><div>Adiantamentos</div><div>Cheques Pré-Datado</div>
</div>

<div class="abs" style="left:7px;top:472px;width:199px;height:30px;background:#e6e6e6;border:1px solid #aaa;border-radius:6px"></div>

<div class="shead" style="left:9px;top:508px;width:197px;height:25px;background:#227fd0"><div class="tab" style="background:#8ec6f6"></div><b class="dot" style="background:#8ec6f6;left:9px;top:8px"></b><span style="top:8px;left:25px">LEGENDA</span></div>

<div class="rb" style="left:5px;top:97px;width:205px;height:251px"></div>
<div class="rb" style="left:5px;top:347.5px;width:205px;height:121.5px"></div>
<div class="rb" style="left:6px;top:504px;width:203px;height:129px"></div>
<div class="rb" style="left:1180px;top:131px;width:147px;height:28px"></div>
<div class="rb" style="left:237px;top:158px;width:1081px;height:42px"></div>
<div class="rb" style="left:224px;top:208px;width:1097px;height:327px"></div>
<div class="num" style="left:176px;top:250px">1</div>
<div class="num" style="left:179px;top:405px">2</div>
<div class="num" style="left:174px;top:564.5px">3</div>
<div class="num" style="left:524px;top:167px">4</div>
<div class="num" style="left:530px;top:214.5px">5</div>
<div class="num" style="left:1197px;top:133px">6</div>

</body></html>
